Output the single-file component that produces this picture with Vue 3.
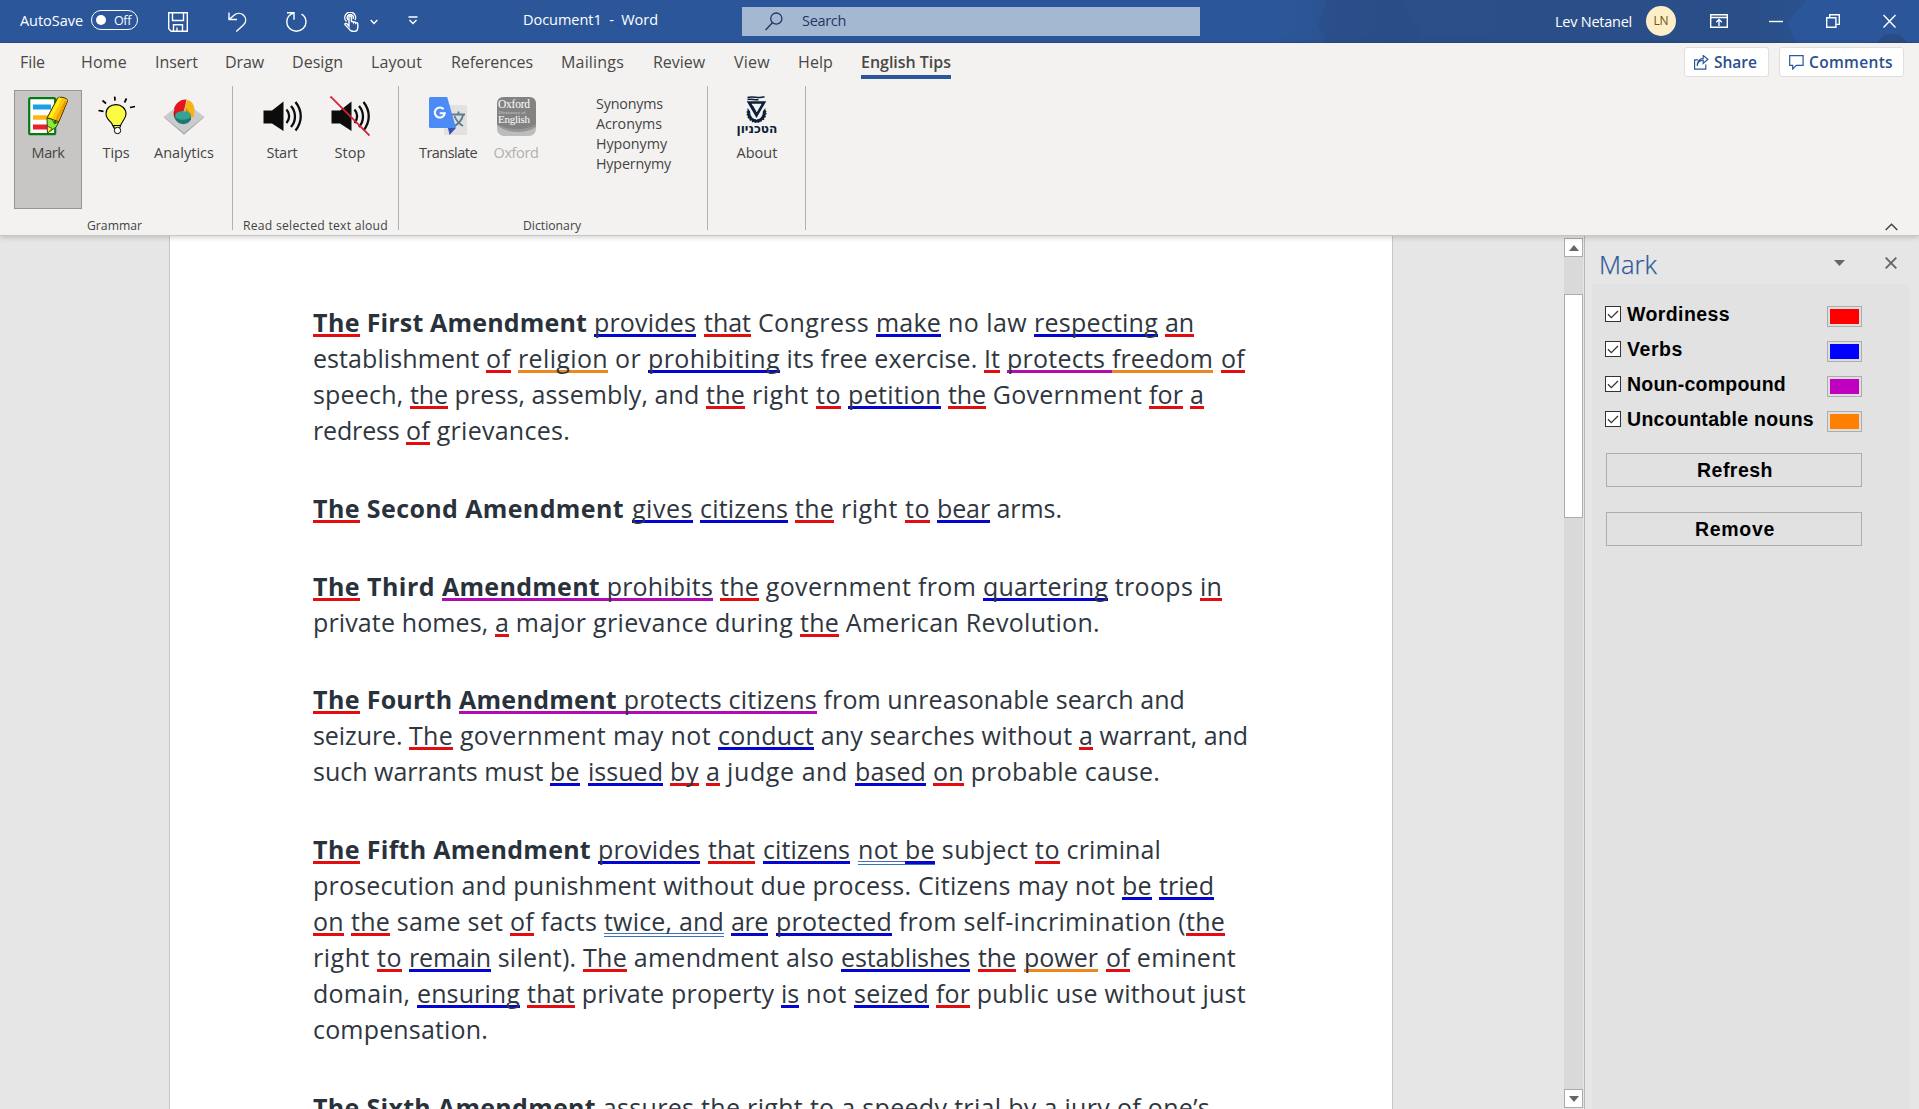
<script setup>
// Spreads an element's letters so its text spans the given width in pixels.
const fit = (el, { value }) => {
  if (!value) return
  el.style.letterSpacing = '0px'
  const range = document.createRange()
  range.selectNodeContents(el)
  const natural = range.getBoundingClientRect().width
  el.style.letterSpacing = `${(value - natural) / el.textContent.length}px`
  el.style.width = `${value}px`
}
const vFit = { mounted: fit }

const tabs = [
  ['File', 20, 25], ['Home', 81, 46], ['Insert', 155, 43], ['Draw', 225, 39],
  ['Design', 292, 51], ['Layout', 371, 51], ['References', 451, 82], ['Mailings', 561, 63],
  ['Review', 653, 52], ['View', 734, 36], ['Help', 798, 35], ['English Tips', 861, 90],
].map(([name, x, w], i, all) => ({
  name, w, gap: x - (i ? all[i - 1][1] + all[i - 1][2] : 0), active: name === 'English Tips',
}))

// A run is [text, right edge, mark]; marks: r, b, p, o, g (grammar), bg; capital B is bold.
const LEFT = 313
const source = [
  [
    [['The', 360, 'r B'], [' First Amendment', 587, 'B'], [' ', 594], ['provides', 696, 'b'], [' ', 704], ['that', 751, 'r'], [' Congress ', 876], ['make', 941, 'b'], [' no law ', 1034], ['respecting', 1158, 'b'], [' ', 1165], ['an', 1194, 'r']],
    [['establishment ', 486], ['of', 511, 'r'], [' ', 518], ['religion', 608, 'o'], [' or ', 648], ['prohibiting', 780, 'b'], [' its free exercise. ', 984], ['It', 1000, 'r'], [' ', 1007], ['protects ', 1112, 'p'], ['freedom', 1213, 'o'], [' ', 1221], ['of', 1245, 'r']],
    [['speech, ', 410], ['the', 448, 'r'], [' press, assembly, and ', 706], ['the', 745, 'r'], [' right ', 816], ['to', 841, 'r'], [' ', 848], ['petition', 941, 'b'], [' ', 948], ['the', 986, 'r'], [' Government ', 1149], ['for', 1183, 'r'], [' ', 1190], ['a', 1204, 'r']],
    [['redress ', 406], ['of', 430, 'r'], [' grievances.', 570]],
  ],
  [
    [['The', 360, 'r B'], [' Second Amendment', 624, 'B'], [' ', 632], ['gives', 693, 'b'], [' ', 700], ['citizens', 788, 'b'], [' ', 795], ['the', 834, 'r'], [' right ', 905], ['to', 930, 'r'], [' ', 937], ['bear', 990, 'b'], [' arms.', 1062]],
  ],
  [
    [['The', 360, 'r B'], [' Third ', 442, 'B'], ['Amendment', 600, 'p B'], [' prohibits', 713, 'p'], [' ', 720], ['the', 759, 'r'], [' government from ', 983], ['quartering', 1108, 'b'], [' troops ', 1200], ['in', 1222, 'r']],
    [['private homes, ', 495], ['a', 509, 'r'], [' major grievance during ', 800], ['the', 839, 'r'], [' American Revolution.', 1100]],
  ],
  [
    [['The', 360, 'r B'], [' Fourth ', 459, 'B'], ['Amendment', 617, 'p B'], [' protects citizens', 817, 'p'], [' from unreasonable search and', 1185]],
    [['seizure. ', 409], ['The', 453, 'r'], [' government may not ', 718], ['conduct', 814, 'b'], [' any searches without ', 1079], ['a', 1093, 'r'], [' warrant, and', 1248]],
    [['such warrants must ', 550], ['be', 580, 'b'], [' ', 588], ['issued', 663, 'b'], [' ', 670], ['by', 699, 'r'], [' ', 706], ['a', 720, 'r'], [' judge and ', 855], ['based', 926, 'b'], [' ', 933], ['on', 964, 'r'], [' probable cause.', 1160]],
  ],
  [
    [['The', 360, 'r B'], [' Fifth Amendment', 591, 'B'], [' ', 598], ['provides', 700, 'b'], [' ', 708], ['that', 755, 'r'], [' ', 763], ['citizens', 850, 'b'], [' ', 858], ['not ', 905, 'g'], ['be', 935, 'bg'], [' subject ', 1035], ['to', 1060, 'r'], [' criminal', 1161]],
    [['prosecution and punishment without due process. ', 918], ['Citizens may not ', 1122], ['be', 1152, 'b'], [' ', 1159], ['tried', 1214, 'b']],
    [['on', 344, 'r'], [' ', 351], ['the', 390, 'r'], [' same set ', 510], ['of', 534, 'r'], [' facts ', 604], ['twice, and', 724, 'g'], [' ', 731], ['are', 768, 'b'], [' ', 776], ['protected', 892, 'b'], [' from self-incrimination (', 1186], ['the', 1225, 'r']],
    [['right ', 377], ['to', 402, 'r'], [' ', 409], ['remain', 491, 'b'], [' silent). ', 583], ['The', 627, 'r'], [' amendment also ', 841], ['establishes', 970, 'b'], [' ', 978], ['the', 1016, 'r'], [' ', 1024], ['power', 1098, 'o'], [' ', 1106], ['of', 1130, 'r'], [' eminent', 1236]],
    [['domain, ', 417], ['ensuring', 520, 'b'], [' ', 527], ['that', 575, 'r'], [' private property ', 781], ['is', 799, 'b'], [' not ', 854], ['seized', 929, 'b'], [' ', 936], ['for', 970, 'r'], [' public use without just', 1246]],
    [['compensation.', 488]],
  ],
  [
    [['The Sixth Amendment', 596, 'B'], [' assures the right to a speedy trial by a jury of one’s', 1210]],
  ],
]
const paragraphs = source.map((lines) =>
  lines.map((runs) =>
    runs.map(([text, end, mark = ''], i) => ({
      text, width: end - (i ? runs[i - 1][1] : LEFT), mark: mark.split(' ').filter(Boolean).map((m) => `m-${m}`),
    })),
  ),
)

const marks = [
  { name: 'Wordiness', w: 103, color: '#ff0000' },
  { name: 'Verbs', w: 56, color: '#0000ff' },
  { name: 'Noun-compound', w: 159, color: '#c000c0' },
  { name: 'Uncountable nouns', w: 187, color: '#ff8000' },
]
const lookups = [['Synonyms', 67], ['Acronyms', 66], ['Hyponymy', 71], ['Hypernymy', 75]]
</script>

<template>
  <div class="app">
    <header class="title-bar">
      <svg class="pattern" width="760" height="43" viewBox="0 0 760 43">
        <defs>
          <linearGradient id="shade"><stop offset="0" stop-color="#2a4d85" stop-opacity="0" /><stop offset=".2" stop-color="#2a4d85" stop-opacity=".8" /><stop offset=".8" stop-color="#2a4d85" stop-opacity=".9" /><stop offset="1" stop-color="#2a4d85" stop-opacity="0" /></linearGradient>
        </defs>
        <rect x="110" width="600" height="43" fill="url(#shade)" />
        <path d="M168 0h72l22 30-8 13h-86l-9-18z" fill="#2a4d85" opacity=".6" />
        <path d="M648 0h56l16 22-12 21h-70l-10-20z" fill="#2b579a" />
        <path d="M718 43l8-9h14l9 9z" fill="#2a4d85" />
      </svg>
      <div class="quick">
        <span v-fit="63" class="autosave">AutoSave</span>
        <div class="toggle"><i></i><span v-fit="17">Off</span></div>
        <svg class="save" width="20" height="20" viewBox="0 0 20 20"><path d="M.7.7h18.6v18.6H3.2L.7 16.8z M4.5.7v7.8h11V.7 M5.5 19.3v-6.5h9v6.5 M9 19v-3.5" /></svg>
        <svg class="undo" width="19" height="20" viewBox="0 0 19 20"><path d="M1 .5v7h8 M1.4 7.2 6 3.2C9 .6 13 .8 15.6 3.3c2.8 2.8 2.8 6.6 0 9.5L8.3 19.5" /></svg>
        <svg class="redo" width="21" height="20" viewBox="0 0 21 20"><path d="M1 .8h7v7 M7.6 1.2C3.5 2.5.8 6 .8 10.2c0 5 4.2 9 9.5 9s9.7-4 9.7-9.2c0-3.5-1.7-6.2-4.5-7.8" /></svg>
        <svg class="touch" width="15" height="20" viewBox="0 0 15 20"><path d="M2.6 9.6A5.4 5.4 0 1 1 11 8 M4.6 8A3 3 0 1 1 9 6.8 M5 14V5.2c0-1.6 2.4-1.6 2.4 0v5c.2-1 2.1-1 2.2.3.5-.8 2-.6 2.1.6.6-.7 2-.4 2.1.8v3.3c0 2.7-1.4 4.3-4 4.3-3 0-4.2-1.1-5.3-3.2L1 12.7c-.4-1.2 1-1.8 2-.9l2 2.3z" /></svg>
        <svg class="caret" width="8" height="6" viewBox="0 0 8 6"><path d="M.7 1 4 4.400 7.300 1" /></svg>
        <svg class="custom" width="10" height="9" viewBox="0 0 10 9"><path d="M.5 1h9M1.500 4 5 7.600 8.500 4" /></svg>
      </div>
      <span v-fit="135" class="doc-name">Document1&nbsp; -&nbsp; Word</span>
      <div class="search">
        <svg width="18" height="19" viewBox="0 0 18 19"><circle cx="11.300" cy="6.600" r="5.600" /><path d="M7.400 10.700.6 18" /></svg>
        <span v-fit="44">Search</span>
      </div>
      <span v-fit="77" class="user">Lev Netanel</span>
      <span class="avatar"><b v-fit="15">LN</b></span>
      <div class="window">
        <svg width="18" height="14" viewBox="0 0 18 14"><path d="M.7.7h16.600v12.600H.7zM.7 3.500h16.600M9 12V5.800M6.200 8.300 9 5.500l2.800 2.800" /></svg>
        <svg width="14" height="14" viewBox="0 0 14 14"><path d="M0 7.500h14" /></svg>
        <svg width="14" height="14" viewBox="0 0 14 14"><path d="M.7 3.700h9.200v9.600H.7zM3.700 3.500V.7h9.600v9.700H10" /></svg>
        <svg width="13" height="14" viewBox="0 0 13 14"><path d="M.5 1l12 12.500M12.500 1l-12 12.500" /></svg>
      </div>
    </header>

    <section class="ribbon">
      <nav class="tabs">
        <span v-for="t in tabs" :key="t.name" class="tab" :class="{ active: t.active }" :style="{ marginLeft: t.gap + 'px' }"><span v-fit="t.w">{{ t.name }}</span></span>
        <div class="actions">
          <button class="share">
            <svg width="15" height="15" viewBox="0 0 15 15"><path d="M4 4.800H.6v9.400h11.200V9.500 M3.200 11c.4-4 2.500-5.700 6-5.800v3.300l4.700-4.200L9.200.5v2.800C5.400 3.500 3.400 6.300 3.200 11z" /></svg>
            <span v-fit="43">Share</span>
          </button>
          <button class="comments">
            <svg width="15" height="15" viewBox="0 0 15 15"><path d="M.7.7h13.400v9.600H7.300L3.700 14v-3.700h-3z" /></svg>
            <span v-fit="84">Comments</span>
          </button>
        </div>
      </nav>
      <div class="groups">
        <div class="group g-grammar">
          <div class="tools">
            <div class="tool pressed">
              <svg width="40" height="40" viewBox="0 0 40 40">
                <rect x="1.200" y="2.200" width="26" height="36" rx="1.500" fill="#fff" stroke="#007d10" stroke-width="2.200" />
                <path d="M5 11h18" stroke="#1ba1e2" stroke-width="5" /><path d="M5 21.500h16" stroke="#fdb515" stroke-width="4.500" /><path d="M5 31h16" stroke="#e8212b" stroke-width="5" />
                <path d="M19 22 29.500 2.200c1.500-2.200 10-.5 10.200 2.400L31 25.500z" fill="#ffc60b" stroke="#3d3100" stroke-width="1" />
                <path d="M22.500 21.500 32.500 2" stroke="#fff21a" stroke-width="3" /><path d="M28.500 24 38 5" stroke="#f39a00" stroke-width="2.500" />
                <path d="M19 22l5 1.200 2.500 4.500 4.500-2.200-2.800 5.500L19.500 37z" fill="#8be837" stroke="#2a5200" />
                <path d="M19.200 30l5 2.500-4.700 4.800z" fill="#fff21a" stroke="#333" stroke-width=".8" />
              </svg>
              <span v-fit="33">Mark</span>
            </div>
            <div class="tool">
              <svg width="40" height="40" viewBox="0 0 40 40">
                <path d="M16 28c-.3-2-6-4.500-6-10.300C10 12 14.500 8.600 20 8.600S30 12.500 30 18c0 5-4.700 7.500-5.500 12l-1.500 2h-5z" fill="#fbfb45" stroke="#000" stroke-width="1.100" />
                <path d="M17.500 29.500h7l-1 3h-5z" fill="#fff36b" stroke="#000" /><circle cx="21.500" cy="34.500" r="3.200" fill="#fff" stroke="#000" />
                <path d="M18.700.6l.3 4M30.500 2.500l-2 4M39 10.500l-5 1M6.500 4.500l3.500 3M2.500 14.500l5 .8" stroke="#000" stroke-width="1.700" fill="none" />
              </svg>
              <span v-fit="27">Tips</span>
            </div>
            <div class="tool">
              <svg width="40" height="40" viewBox="0 0 40 40">
                <path d="M20 5 40 20.500 20 38.500 0 20.500z" fill="#c9cbcd" /><path d="M0 20.500 20 37l20-16.500v1L20 38.700 0 21.500z" fill="#a9abad" />
                <path d="M10 15 20 16l-8.500 7.500C9.500 20.500 9.300 17.500 10 15z" fill="#9b1010" /><path d="M10 12.500C12 6.500 17 3 22.500 3.500L20 14.500 11 19z" fill="#e5141c" />
                <path d="M23 4c6 1 8.500 7 7 13v4l-3 1-6.500-7.500z" fill="#f4b517" /><path d="M22 15l5 6.500v-3L22 12z" fill="#c98800" />
                <path d="M11 20c3-6 12-6 16 .5v3c-3 6-12 6.500-16-.5z" fill="#1f786e" /><ellipse cx="19" cy="19.500" rx="8" ry="4.300" fill="#35a294" />
              </svg>
              <span v-fit="60">Analytics</span>
            </div>
          </div>
          <span v-fit="55" class="caption">Grammar</span>
        </div>

        <div class="group g-read">
          <div class="tools">
            <div v-for="s in [['Start', 31], ['Stop', 31]]" :key="s[0]" class="tool">
              <svg width="40" height="40" viewBox="0 0 40 40">
                <path d="M1.500 14.500H10L21.500 5.500v29.500L10 27.500H1.500z" fill="#0c0c0c" />
                <path d="M24.500 13.500c3.500 4 3.500 9.500 0 13.500M29 10c5.300 6 5.300 15 0 21M33.500 6c7 9 7 19.500 0 28.500" fill="none" stroke="#0c0c0c" stroke-width="2.300" />
                <path v-if="s[0] === 'Stop'" d="M.5.5l39 39" stroke="#d81e3c" stroke-width="1.800" />
              </svg>
              <span v-fit="s[1]">{{ s[0] }}</span>
            </div>
          </div>
          <span v-fit="145" class="caption">Read selected text aloud</span>
        </div>

        <div class="group g-dict">
          <div class="tools">
            <div class="tool">
              <svg width="40" height="40" viewBox="0 0 40 40">
                <rect x="16" y="9" width="23" height="30" rx="1.500" fill="#e1e1e1" />
                <path d="M24 18.500h13M30.500 15.500v3M35 19c-1 5-5 9-9 11.500M26.500 20c1.500 4 5 8 8.500 10" fill="none" stroke="#607d8b" stroke-width="1.900" />
                <path d="M20 32h8l-6.500 7z" fill="#3a51b5" /><path d="M2.500 1h16.700L28 32H2.500Q1 32 1 30.500v-28Q1 1 2.500 1z" fill="#4c8bf5" />
                <path d="M15.600 13.200a5 5 0 1 0 1.200 4H11.700" fill="none" stroke="#fff" stroke-width="2.100" />
              </svg>
              <span v-fit="58">Translate</span>
            </div>
            <div class="tool disabled">
              <svg width="40" height="40" viewBox="0 0 40 40">
                <rect x="1" y="1" width="39" height="39" rx="7" fill="#bcbcbc" />
                <path d="M1 29c10 9 29 9 39 2v-3H1z" fill="#979797" />
                <path d="M1 8q0-7 7-7h25q7 0 7 7v20C30 35 12 35 1 28z" fill="#828282" />
                <g fill="#fff" font-family="'Liberation Serif', serif"><text x="2" y="11.500" font-size="11.500" textLength="32">Oxford</text><text x="2.500" y="17.500" font-size="5" textLength="27" opacity=".55">Dictionary of</text><text x="2" y="27" font-size="11" textLength="32">English</text></g>
              </svg>
              <span v-fit="45">Oxford</span>
            </div>
            <ul class="lookups">
              <li v-for="l in lookups" :key="l[0]"><span v-fit="l[1]">{{ l[0] }}</span></li>
            </ul>
          </div>
          <span v-fit="58" class="caption">Dictionary</span>
        </div>

        <div class="group g-about">
          <div class="tools">
            <div class="tool">
              <svg width="44" height="40" viewBox="0 0 44 40">
                <circle cx="21.500" cy="17" r="7.800" fill="none" stroke="#0b1f38" stroke-width="3" /><circle cx="21.500" cy="17" r="9.200" fill="none" stroke="#0b1f38" stroke-width="1.500" stroke-dasharray="1.700 1.200" />
                <path d="M10 3.500h23v5L21.500 24 10 8.500z" fill="#f3f2f1" />
                <path d="M12.500 1.600c5-1.800 11 1.200 17-.8M12.500 3.500c4-1 8 1 11 0" fill="none" stroke="#0b1f38" stroke-width="1.600" />
                <path d="M14 6.500h15L21.500 19.500zM14 6l7.500 13" fill="none" stroke="#0b1f38" stroke-width="2.600" /><path d="M17 10l4.500 8" stroke="#0b1f38" stroke-width="2" />
                <text x="22" y="37" text-anchor="middle" textLength="41" lengthAdjust="spacingAndGlyphs" font-family="'DejaVu Sans', sans-serif" font-weight="bold" font-size="13" fill="#0b1f38">הטכניון</text>
              </svg>
              <span v-fit="41">About</span>
            </div>
          </div>
        </div>
        <svg class="collapse" width="13" height="8" viewBox="0 0 13 8"><path d="M.7 7 6.500 1.200 12.300 7" /></svg>
      </div>
    </section>

    <main class="workspace">
      <div class="canvas">
        <article class="page">
          <div v-for="(p, pi) in paragraphs" :key="pi" class="para">
            <div v-for="(line, li) in p" :key="li" class="line"><span v-for="(run, ri) in line" :key="ri" v-fit="run.width" class="run" :class="run.mark">{{ run.text }}</span></div>
          </div>
        </article>
      </div>
      <div class="scroll">
        <div class="arrow"><svg width="10" height="6" viewBox="0 0 10 6"><path d="M0 6 5 0l5 6z" /></svg></div>
        <div class="track"><div class="thumb"></div></div>
        <div class="arrow"><svg width="10" height="6" viewBox="0 0 10 6"><path d="M0 0h10L5 6z" /></svg></div>
      </div>
      <aside class="pane">
        <div class="pane-head">
          <h2 v-fit="58">Mark</h2>
          <svg class="menu" width="11" height="6" viewBox="0 0 11 6"><path d="M0 0h11L5.500 6z" fill="#666" /></svg>
          <svg class="close" width="12" height="12" viewBox="0 0 12 12"><path d="M.7.7l10.600 10.600M11.300.7.7 11.300" fill="none" stroke="#666" stroke-width="1.900" /></svg>
        </div>
        <div class="pane-body">
          <div v-for="m in marks" :key="m.name" class="mark-row">
            <span class="check"><svg width="12" height="9" viewBox="0 0 12 9"><path d="M1 4.300l3.300 3.300L11 1" fill="none" stroke="#333" stroke-width="1.300" /></svg></span>
            <span class="mark-name"><span v-fit="m.w">{{ m.name }}</span></span>
            <span class="swatch"><i :style="{ background: m.color }"></i></span>
          </div>
          <button class="pane-btn"><span v-fit="76">Refresh</span></button>
          <button class="pane-btn"><span v-fit="80">Remove</span></button>
        </div>
      </aside>
    </main>
  </div>
</template>

<style>
body { margin: 0; overflow: hidden; }
</style>

<style scoped>
* { box-sizing: border-box; }
.app { width: 1919px; height: 1109px; display: flex; flex-direction: column; overflow: hidden; font-family: "Open Sans", "Noto Sans", sans-serif; color: #444; white-space: nowrap; background: #e6e6e6; }
span, b, h2 { white-space: pre; }
button { font: inherit; padding: 0; margin: 0; }
svg { display: block; flex: none; }

.title-bar { position: relative; height: 43px; flex: none; display: flex; align-items: flex-start; background: #2b579a; border-bottom: 1px solid #2d4f88; color: #fff; font-size: 14.5px; line-height: 20px; }
.title-bar svg { fill: none; stroke: #fff; stroke-width: 1.4; }
.title-bar .pattern { position: absolute; right: 0; top: 0; stroke: none; }
.title-bar > :not(.pattern) { position: relative; }
.quick { display: flex; width: 523px; padding-left: 20px; }
.autosave { margin-top: 11px; }
.toggle { width: 47px; height: 20px; margin: 10px 0 0 8px; border: 1.500px solid #fff; border-radius: 10px; display: flex; align-items: center; padding-left: 4px; font-size: 12.500px; line-height: 17px; }
.toggle i { width: 10px; height: 10px; border-radius: 50%; background: #fff; margin-right: 8px; }
.save { margin: 12px 0 0 30px; }
.undo { margin: 12px 0 0 40px; }
.redo { margin: 12px 0 0 39px; }
.touch { margin: 12px 0 0 37px; }
.caret { margin: 19px 0 0 11px; }
.custom { margin: 16px 0 0 30px; }
.doc-name { margin-top: 10px; }
.search { margin: 7px 0 0 84px; width: 458px; height: 29px; background: #a4b8d1; display: flex; color: #1f3864; padding-left: 23px; }
.title-bar .search svg { margin-top: 5px; stroke: #1f3864; stroke-width: 1.3; }
.search span { margin: 4px 0 0 19px; }
.user { margin: 12px 0 0 355px; }
.avatar { width: 30px; height: 30px; margin: 6px 0 0 14px; border-radius: 50%; background: #fdeec8; color: #6b5410; display: flex; align-items: center; justify-content: center; font-size: 12px; }
.avatar b { font-weight: 400; }
.window { display: flex; margin: 14px 0 0 34px; gap: 43px; }
.window svg:nth-child(1) { margin-right: -2px; }

.ribbon { position: relative; z-index: 2; height: 193px; flex: none; background: #f3f2f1; border-bottom: 1px solid #c8c6c4; box-shadow: 0 1px 6px rgba(0, 0, 0, .2); }
.tabs { display: flex; height: 43px; font-size: 16px; line-height: 22px; color: #4a4846; }
.tab { flex: none; padding-top: 8px; height: 36px; }
.tab > span { display: block; }
.tab.active { font-weight: 600; border-bottom: 4px solid #2b579a; }
.actions { margin-left: auto; display: flex; gap: 10px; padding: 4px 15px 0 0; }
.actions button { height: 30px; background: #fff; border: 1px solid #e1dfdd; border-radius: 3px; color: #2b4f8c; font-weight: 600; font-size: 15.500px; display: flex; align-items: center; gap: 5px; padding-left: 9px; }
.actions svg { fill: none; stroke: #2b579a; stroke-width: 1.2; }
.share { width: 85px; }
.comments { width: 125px; }

.groups { display: flex; }
.group { position: relative; height: 144px; border-right: 1px solid #b3b0ad; display: flex; flex-direction: column; align-items: center; justify-content: space-between; }
.g-grammar { width: 233px; }
.g-grammar .caption { margin-right: 3px; }
.g-read { width: 166px; }
.g-dict { width: 309px; }
.g-dict .caption { margin-right: 2px; }
.g-about { width: 98px; }
.tools { display: flex; align-self: flex-start; padding: 4px 0 0 15px; }
.g-grammar .tools { padding-left: 14px; }
.tool { width: 68px; height: 119px; display: flex; flex-direction: column; align-items: center; padding-top: 6px; font-size: 14.500px; line-height: 20px; }
.tool span { margin-top: 7px; }
.pressed { background: #c8c6c4; border: 1px solid #979593; padding-top: 5px; }
.disabled { color: #b1afad; }
.caption { font-size: 12.200px; line-height: 16px; margin-bottom: -4px; color: #444; }
.lookups { list-style: none; margin: 4px 0 0 46px; padding: 0; font-size: 14.300px; line-height: 20px; }
.lookups span { display: block; }
.collapse { margin: 137px 21px 0 auto; fill: none; stroke: #444; stroke-width: 1.500; }

.workspace { flex: 1; display: flex; min-height: 0; }
.canvas { width: 1564px; padding-left: 169px; background: #e6e6e6; overflow: hidden; }
.page { width: 1224px; height: 100%; background: #fff; border: solid #c6c6c6; border-width: 0 1px; padding: 69px 0 0 143px; overflow: hidden; }
.para { margin-bottom: 42px; }
.para:nth-child(3) { margin-bottom: 41px; }
.line { display: flex; height: 36px; }
.run { flex: none; height: 36px; line-height: 34px; font-size: 25px; color: #2f3640; background-repeat: no-repeat; background-position: 0 29px; background-size: 100% 3px; }
.m-B { font-weight: 700; color: #29313b; }
.m-r { background-image: linear-gradient(#e30c0f, #e30c0f); }
.m-b { background-image: linear-gradient(#0505d2, #0505d2); }
.m-p { background-image: linear-gradient(#b00db0, #b00db0); }
.m-o { background-image: linear-gradient(#ec8722, #ec8722); }
.m-g { background-image: linear-gradient(#3f6fbf 1px, transparent 1px 3px, #3f6fbf 3px); background-size: 100% 4px; }
.m-bg { background-image: linear-gradient(#0505d2 3px, #3f6fbf 3px); background-size: 100% 4px; }

.scroll { width: 19px; padding: 2px 0 1px; display: flex; flex-direction: column; background: #e6e6e6; }
.arrow { height: 19px; flex: none; background: #fff; border: 1px solid #ababab; display: flex; align-items: center; justify-content: center; fill: #666; }
.track { flex: 1; background: #d9d9d9; padding-top: 37px; }
.thumb { height: 224px; background: #fff; border: 1px solid #ababab; }

.pane { flex: 1; margin-left: 1px; border-left: 1px solid #b8b8b8; background: #e6e6e6; display: flex; flex-direction: column; padding-left: 7px; }
.pane-head { height: 48px; flex: none; display: flex; padding-left: 7px; }
.pane-head h2 { margin: 10px 0 0; font-weight: 300; font-size: 25.500px; line-height: 36px; color: #2b579a; -webkit-text-stroke: .25px #2b579a; }
.menu { margin: 24px 0 0 177px; }
.close { margin: 21px 0 0 40px; }
.pane-body { flex: 1; width: 317px; background: #e2e2e2; padding: 21px 0 0 13px; font-family: "Liberation Sans", Arial, sans-serif; font-weight: 700; font-size: 19.500px; color: #000; }
.mark-row { display: flex; height: 35px; width: 257px; }
.check { width: 16px; height: 16px; margin-top: 1px; background: #fff; border: 1.500px solid #333; display: flex; align-items: center; justify-content: center; }
.mark-name { margin-left: 6px; line-height: 18px; }
.mark-name span { display: block; }
.swatch { width: 35px; height: 21px; margin: 1px 0 0 auto; border: 1px solid #adadad; padding: 2px; background: #dedede; }
.swatch i { display: block; height: 15px; }
.pane-btn { width: 256px; height: 34px; margin: 8px 0 0 1px; padding-left: 2px; background: #e1e1e1; border: 1px solid #adadad; display: flex; justify-content: center; align-items: center; color: #000; }
.pane-btn + .pane-btn { margin-top: 25px; }
</style>
